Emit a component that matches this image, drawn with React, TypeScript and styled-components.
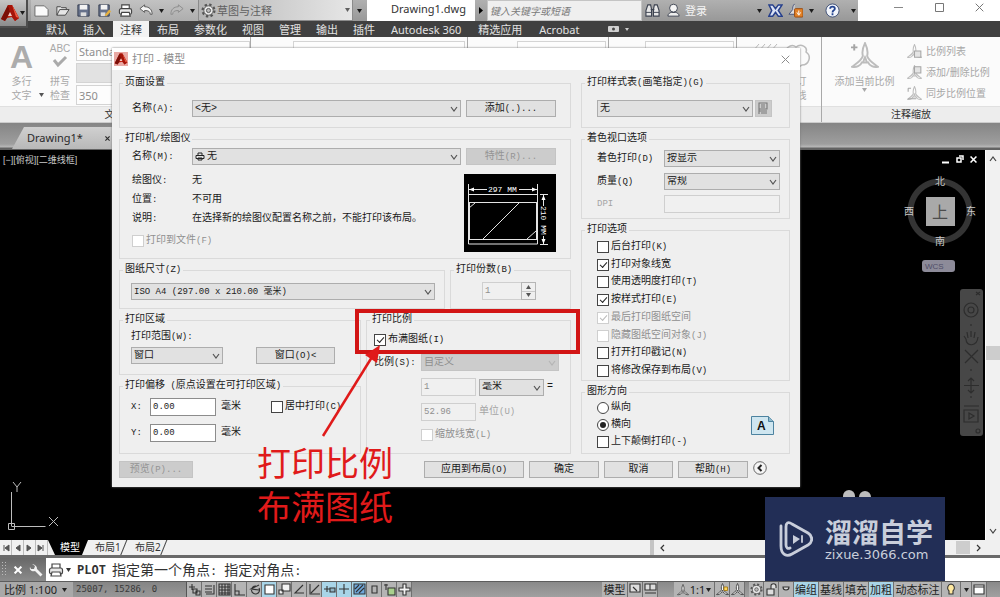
import React from "react";
import styled, { createGlobalStyle, css } from "styled-components";

const CJK = '"Noto Sans CJK SC", sans-serif';

const GlobalStyle = createGlobalStyle`
  *, *::before, *::after { box-sizing: border-box; }
  html, body { margin: 0; padding: 0; }
  body { font: 11px/14px "Noto Sans", ${CJK}; color: #1c1c1c; background: #000; }
  button, input, select { font: inherit; color: inherit; margin: 0; padding: 0; border-radius: 0; }
  button { border: 0; background: none; }
  svg { display: block; flex: none; }
`;

const Desktop = styled.div`
  position: relative;
  display: flex;
  flex-direction: column;
  min-height: 100vh;
  overflow: hidden;
`;

/* ---------- application title bar ---------- */

const TitleBar = styled.header`
  display: flex;
  height: 21px;
  align-items: stretch;
  background: linear-gradient(#b0b0b0, #989898);
  padding-left: 31px;
`;
const AppButton = styled.button`
  position: absolute;
  left: 0;
  top: 0;
  z-index: 1;
  width: 28px;
  height: 28px;
  display: flex;
  align-items: center;
  background: linear-gradient(#c6c6c6, #8c8c8c);
  border-right: 2px solid #4d4d4d;
  border-bottom: 2px solid #4d4d4d;
`;
const QuickTools = styled.div`
  display: flex;
  align-items: center;
  width: 167px;
  background: linear-gradient(#c2c2c2, #adadad);
`;
const IconButton = styled.button<{ $w?: number }>`
  width: ${(p) => p.$w ?? 21}px;
  display: flex;
  align-items: center;
  justify-content: center;
`;
const Workspace = styled.div`
  position: relative;
  display: flex;
  align-items: center;
  width: 155px;
  padding-left: 2px;
  background: linear-gradient(90deg, #b4b4b4, #e6e6e6);
  border: 1px solid #8b8b8b;
  border-top: 0;
  color: #606060;
`;
const WorkspaceSelect = styled.select`
  flex: 1;
  appearance: none;
  border: 0;
  background: none;
  padding-left: 1px;
  font: 11px/18px ${CJK};
  height: 19px;
`;
const DocName = styled.h1`
  margin: 0 0 0 1px;
  width: 108px;
  padding-left: 24px;
  background: #fff;
  font: 11px/17px "Noto Sans", sans-serif;
  color: #333;
`;
const SearchInput = styled.input`
  width: 155px;
  border: 1px solid #c4c4c4;
  background: #efefef;
  padding-left: 2px;
  font: italic 10px/16px ${CJK};
  &::placeholder { color: #7a7a7a; opacity: 1; }
`;
const Login = styled.button`
  width: 70px;
  padding-left: 1px;
  text-align: left;
  color: #f4f4f4;
`;
const WindowButtons = styled.div`
  display: flex;
  flex: 1;
  padding: 0 0 6px 20px;
  background: #fff;
  color: #777;
  & > button { flex: 1; }
`;

/* ---------- ribbon ---------- */

const RibbonTabs = styled.nav`
  display: flex;
  gap: 1px;
  height: 16px;
  padding-left: 39px;
  background: #404040;
`;
const RibbonTab = styled.a<{ $active?: boolean; $wide?: boolean }>`
  padding: 0 ${(p) => (p.$wide ? 8 : 7)}px;
  line-height: 17px;
  text-decoration: none;
  color: ${(p) => (p.$active ? "#333" : "#e2e2e2")};
  background: ${(p) => (p.$active ? "#f3f3f3" : "transparent")};
`;
const Ribbon = styled.section`
  display: grid;
  grid-template-columns: 251px 217px 141px 128px 85px 1fr;
  height: 86px;
  background: #fbfbfb;
  border-bottom: 1px solid #ccc;
  color: #a8a8a8;
  line-height: 13px;
`;
const Panel = styled.div`
  display: flex;
  flex-direction: column;
  border-right: 1px solid #a9a9a9;
  min-width: 0;
  &:last-child { border-right: 0; }
`;
const PanelBody = styled.div<{ $pad?: string }>`
  flex: 1;
  display: flex;
  padding: ${(p) => p.$pad ?? "4px 2px"};
`;
const PanelTitle = styled.div`
  display: flex;
  align-items: center;
  justify-content: center;
  gap: 16px;
  height: 16px;
  background: #ededed;
  border-top: 1px solid #e0e0e0;
  color: #333;
  font-size: 10px;
`;
const BigTool = styled.button<{ $w: number }>`
  width: ${(p) => p.$w}px;
  display: flex;
  flex-direction: column;
  align-items: center;
  justify-content: flex-start;
  white-space: nowrap;
  font-size: 10px;
  line-height: 14px;
`;
const DropMark = styled.button`
  align-self: flex-end;
  height: 22px;
  width: 5px;
  color: #555;
`;
const BigA = styled.span`
  font: bold 32px/32px "Liberation Sans", sans-serif;
  color: #acacac;
`;
const Abc = styled.span`
  font: 10px/12px "Liberation Sans", sans-serif;
  margin-top: 2px;
`;
const Caption = styled.span<{ $gap?: number }>`
  margin-top: ${(p) => p.$gap ?? 0}px;
`;
const StyleFields = styled.div`
  flex: 1;
  display: flex;
  flex-direction: column;
  gap: 2px;
`;
const RibbonField = styled.input<{ $fill?: string }>`
  width: 100%;
  height: 20px;
  padding-left: 2px;
  border: 1px solid #d4d4d4;
  background: ${(p) => p.$fill ?? "#fdfdfd"};
  color: #8e8e8e;
`;
const SmallTools = styled.div`
  display: flex;
  flex-direction: column;
  gap: 3px;
  padding-left: 8px;
`;
const SmallTool = styled.button`
  display: flex;
  align-items: center;
  gap: 4px;
  height: 18px;
  font-size: 10px;
  white-space: nowrap;
`;

/* ---------- drawing area ---------- */

const DocTabs = styled.div`
  display: flex;
  align-items: flex-end;
  height: 27px;
  padding-left: 12px;
  background: linear-gradient(#858585, #9e9e9e 21px, #b9b9b9 24px, #636363 25px);
  border-bottom: 1px solid #636363;
`;
const DocTab = styled.a`
  display: flex;
  align-items: center;
  justify-content: space-between;
  width: 110px;
  height: 22px;
  padding: 0 12px 0 15px;
  clip-path: polygon(0 100%, 12px 0, 100% 0, 100% 100%);
  background: linear-gradient(#d0d0d0, #b8b8b8);
  color: #2a2a2a;
  text-decoration: none;
`;
const Work = styled.main`
  flex: 1;
  display: flex;
  min-height: 390px;
`;
const Canvas = styled.div`
  flex: 1;
  position: relative;
  display: flex;
  justify-content: space-between;
  background: #000;
  color: #c9c9c9;
`;
const ViewLabel = styled.span`
  padding: 3px;
  font: 9px/14px "Liberation Sans", ${CJK};
`;
const UcsIcon = styled.svg`
  position: absolute;
  left: 6px;
  bottom: 6px;
`;
const ViewTools = styled.div`
  display: flex;
  flex-direction: column;
  align-items: flex-end;
  padding: 5px 2px;
`;
const MdiButtons = styled.div`
  display: flex;
  gap: 3px;
  padding-right: 4px;
  color: #fff;
`;
const Compass = styled.div`
  display: grid;
  grid-template: 16px 44px 16px / 18px 44px 18px;
  place-items: center;
  margin: 9px 3px 0 0;
  font: 10px/14px ${CJK};
  background: radial-gradient(circle at center, transparent 26px, #343434 27px, #343434 32px, transparent 33px);
`;
const CompassPoint = styled.span<{ $at: string }>`
  grid-area: ${(p) => p.$at};
`;
const CubeFace = styled.button`
  grid-area: 2 / 2;
  width: 29px;
  height: 29px;
  background: #a9a9a9;
  color: #4c4c4c;
  font: 16px/26px ${CJK};
`;
const Wcs = styled.button`
  margin: 11px 28px 0 0;
  width: 33px;
  height: 12px;
  padding-left: 3px;
  border-radius: 3px;
  background: #8d8b99;
  color: #4f4d68;
  text-align: left;
  font: 8px/11px "Liberation Sans", sans-serif;
`;
const NavBar = styled.div`
  margin-top: 17px;
  width: 23px;
  height: 147px;
  border-radius: 3px;
  background: #474747;
`;
const VScroll = styled.div`
  width: 15px;
  display: flex;
  flex-direction: column;
  align-items: center;
  justify-content: space-between;
  padding: 5px 0;
  background: #f1f1f1;
  border-left: 1px solid #fff;
  color: #444;
`;
const VThumb = styled.div`
  width: 100%;
  height: 14px;
  margin-top: 16px;
  background: #cdcdcd;
`;

/* ---------- layout tabs, command line, status bar ---------- */

const LayoutBar = styled.div`
  display: flex;
  height: 15px;
  background: #f0f0f0;
  color: #333;
`;
const StepButton = styled.button`
  width: 12px;
  display: flex;
  align-items: center;
  justify-content: center;
  border-right: 1px solid #bbb;
  color: #555;
`;
const LayoutTab = styled.a<{ $active?: boolean }>`
  width: 40px;
  padding-left: ${(p) => (p.$active ? 12 : 7)}px;
  font: 10px/14px "Noto Sans", ${CJK};
  text-decoration: none;
  white-space: nowrap;
  color: ${(p) => (p.$active ? "#fff" : "#333")};
  ${(p) =>
    p.$active
      ? css`background: #000; clip-path: polygon(0 0, 100% 0, 34px 100%, 7px 100%);`
      : css`background: linear-gradient(112deg, transparent 35px, #444 36px, transparent 37px);`}
`;
const HScroll = styled.div`
  display: flex;
  align-items: center;
  justify-content: space-between;
  width: 35%;
  margin-left: auto;
  padding: 0 18px 0 5px;
  border-left: 4px solid #c4c4c4;
  color: #333;
`;
const HThumb = styled.div`
  width: 14px;
  height: 13px;
  margin: 0 4px 0 auto;
  background: #cdcdcd;
`;
const CommandBar = styled.div`
  display: flex;
  align-items: center;
  height: 26px;
  border-top: 3px solid #6a6a6a;
  background: #fff;
  color: #333;
`;
const CommandGrip = styled.div`
  display: flex;
  align-items: center;
  justify-content: space-between;
  width: 46px;
  height: 100%;
  padding: 0 3px 0 2px;
  background: linear-gradient(#686868, #8b8b8b);
  color: #fff;
`;
const CommandName = styled.b`
  margin-left: 6px;
  font: bold 12px/18px "DejaVu Sans Mono", monospace;
`;
const Prompt = styled.span`
  margin-left: 6px;
  white-space: pre;
  font: 14px/18px ${CJK};
`;
const PromptMark = styled.span`
  font: 12px/18px "DejaVu Sans Mono", monospace;
`;
const StatusBar = styled.footer`
  display: flex;
  align-items: stretch;
  height: 16px;
  background: linear-gradient(#8a8a8a, #a0a0a0);
  border-top: 1px solid #5d5d5d;
  color: #222;
  font: 11px/15px "Noto Sans", ${CJK};
  white-space: nowrap;
`;
const StatusScale = styled.button`
  display: flex;
  align-items: center;
  width: 73px;
  gap: 5px;
  padding-left: 4px;
  text-align: left;
  background: #a9a9a9;
`;
const Coords = styled.output`
  flex: none;
  width: 114px;
  padding-left: 3px;
  white-space: pre;
  background: linear-gradient(#858585, #989898);
  border-right: 1px solid #555;
  font: 9px/15px "DejaVu Sans Mono", monospace;
  color: #3a3a3a;
`;
const StatusButton = styled.button<{ $on?: boolean; $w?: number }>`
  flex: none;
  width: ${(p) => p.$w ?? 15}px;
  display: flex;
  justify-content: center;
  align-items: center;
  gap: 1px;
  border-right: 1px solid #707070;
  background: ${(p) => (p.$on ? "#a9d5e8" : "#b4b4b4")};
`;
const StatusSpace = styled.div<{ $w?: number }>`
  ${(p) => (p.$w ? `width: ${p.$w}px; flex: none;` : "flex: 1;")}
`;

/* ---------- plot dialog ---------- */

const Dialog = styled.form`
  position: absolute;
  left: 112px;
  top: 48px;
  z-index: 2;
  width: 688px;
  background: #efefef;
  box-shadow: 0 0 2px #777;
  font: 10px/12px "Liberation Mono", ${CJK};
  color: #1a1a1a;
`;
const DialogTitle = styled.div`
  display: flex;
  align-items: center;
  gap: 4px;
  height: 22px;
  padding: 0 10px 0 2px;
  background: #fff;
  color: #8c8c8c;
  font: 11px/16px "Noto Sans", ${CJK};
`;
const Spacer = styled.span`
  flex: 1;
`;
const DialogBody = styled.div`
  display: grid;
  grid-template-columns: 1fr 209px;
  gap: 7px 10px;
  padding: 7px 10px 9px 7px;
`;
const Column = styled.div`
  display: flex;
  flex-direction: column;
  gap: 5px;
  min-width: 0;
`;
const Pair = styled.div<{ $right: number }>`
  display: grid;
  grid-template-columns: 1fr ${(p) => p.$right}px;
  gap: 5px;
`;
const GroupFrame = styled.fieldset<{ $h: number; $grow?: boolean }>`
  min-width: 0;
  margin: 0;
  padding: 0;
  min-height: ${(p) => p.$h}px;
  ${(p) => p.$grow && "flex: 1;"}
  border: 1px solid #dadada;
  white-space: nowrap;
`;
const GroupBody = styled.div<{ $pad: string }>`
  padding: ${(p) => p.$pad};
`;
const Legend = styled.legend`
  margin-left: 3px;
  padding: 0 2px;
  white-space: pre;
`;
const Latin = styled.span`
  font-size: 9px;
  white-space: pre;
`;
const Row = styled.div<{ $top?: number; $gap?: number }>`
  display: flex;
  align-items: center;
  gap: ${(p) => p.$gap ?? 5}px;
  margin-top: ${(p) => p.$top ?? 0}px;
`;
const FieldLabel = styled.label<{ $w: number; $off?: boolean }>`
  flex: none;
  width: ${(p) => p.$w}px;
  color: ${(p) => (p.$off ? "#a5a5a5" : "inherit")};
`;
const SelectBox = styled.span<{ $w?: number; $off?: boolean }>`
  position: relative;
  ${(p) => (p.$w ? `width: ${p.$w}px; flex: none;` : "flex: 1;")}
  height: 17px;
  color: ${(p) => (p.$off ? "#999" : "#222")};
  & > svg { position: absolute; right: 3px; top: 5px; color: ${(p) => (p.$off ? "#b5b5b5" : "#555")}; pointer-events: none; }
`;
const NativeSelect = styled.select<{ $small?: boolean; $indent?: number }>`
  appearance: none;
  display: block;
  width: 100%;
  height: 17px;
  padding-left: ${(p) => p.$indent ?? 2}px;
  border: 1px solid #adadad;
  background: #e1e1e1;
  font-size: ${(p) => (p.$small ? 9 : 10)}px;
  opacity: 1;
  &:disabled { background: #cccccc; border-color: #c4c4c4; color: #8f8f8f; }
`;
const SelectGlyph = styled.span`
  position: absolute;
  left: 3px;
  top: 4px;
`;
const PushButton = styled.button<{ $w: number }>`
  flex: none;
  width: ${(p) => p.$w}px;
  height: 17px;
  border: 1px solid #adadad;
  background: #e1e1e1;
  line-height: 14px;
  text-align: center;
  &:disabled { background: #cccccc; border-color: #c4c4c4; color: #949494; }
`;
const TextInput = styled.input<{ $w: number }>`
  flex: none;
  width: ${(p) => p.$w}px;
  height: 18px;
  padding: 0 2px 1px;
  border: 1px solid #8c8c8c;
  background: #fff;
  font-size: 9px;
  &:disabled { background: #f0f0f0; border-color: #cfcfcf; color: #8f8f8f; }
`;
const Facts = styled.dl`
  display: grid;
  grid-template-columns: 60px 1fr;
  grid-auto-rows: 19px;
  align-items: center;
  margin: 6px 0 2px;
  & > dd { margin: 0; }
`;
const Preview = styled.svg`
  margin-top: 9px;
`;
const Between = styled.div`
  display: flex;
  justify-content: space-between;
`;
const CheckLabel = styled.label<{ $off?: boolean }>`
  display: flex;
  align-items: center;
  gap: 2px;
  height: 12px;
  color: ${(p) => (p.$off ? "#8f8f8f" : "inherit")};
`;
const CheckInput = styled.input<{ $radio?: boolean }>`
  appearance: none;
  flex: none;
  width: 12px;
  height: 12px;
  border: 1px solid #444;
  background: #fff;
  border-radius: ${(p) => (p.$radio ? "50%" : 0)};
  &:disabled { border-color: #cfcfcf; }
  &:checked::after {
    content: "";
    display: block;
    ${(p) =>
      p.$radio
        ? css`width: 6px; height: 6px; margin: 2px; border-radius: 50%; background: #222;`
        : css`width: 7px; height: 4px; margin: 2px 0 0 2px; border: solid #222; border-width: 0 0 1px 1px; transform: rotate(-48deg);`}
  }
  &:disabled:checked::after { border-color: #bbb; }
`;
const OptionList = styled.div<{ $h: number }>`
  display: flex;
  flex-direction: column;
  justify-content: space-between;
  align-items: flex-start;
  height: ${(p) => p.$h}px;
`;
const Spinner = styled.div`
  display: flex;
  width: 54px;
  height: 18px;
  color: #999;
  & > input { border-right: 0; }
`;
const SpinButtons = styled.div`
  display: grid;
  width: 15px;
  border: 1px solid #b5b5b5;
  & > button { display: grid; place-items: center; color: #555; }
  & > button + button { border-top: 1px solid #c9c9c9; }
`;
const RoundButton = styled.button`
  width: 14px;
  height: 14px;
  margin-bottom: 3px;
`;
const Footer = styled.div`
  grid-column: 1 / -1;
  display: flex;
  align-items: center;
  gap: 5px;
  padding-right: 23px;
`;

/* ---------- annotation and watermark ---------- */

const RedFrame = styled.div`
  position: absolute;
  left: 355px;
  top: 309px;
  z-index: 3;
  width: 225px;
  height: 45px;
  border: 4px solid #d21515;
`;
const RedArrow = styled.svg`
  position: absolute;
  left: 318px;
  top: 342px;
  z-index: 3;
`;
const RedNote = styled.p`
  position: absolute;
  left: 257px;
  top: 440px;
  z-index: 3;
  margin: 0;
  color: #e01a1a;
  font: 34px/44px ${CJK};
`;
const Watermark = styled.div`
  position: absolute;
  right: 55px;
  bottom: 16px;
  z-index: 4;
  display: flex;
  align-items: center;
  gap: 12px;
  width: 180px;
  height: 84px;
  padding-left: 14px;
  background: #222e56;
  color: #c9cedb;
`;
const WatermarkName = styled.strong`
  display: block;
  font: bold 27px/32px ${CJK};
`;
const WatermarkUrl = styled.span`
  display: block;
  font: 13px/14px "DejaVu Sans", sans-serif;
`;
const WatermarkEars = styled.svg`
  position: absolute;
  right: 128px;
  bottom: 100px;
  z-index: 4;
`;

/* ---------- small drawings ---------- */

const Chevron = ({ d = "down" }: { d?: "down" | "up" | "left" | "right" }) => {
  const paths = { down: "M1 2l3 4 3-4", up: "M1 6l3-4 3 4", left: "M5 1L2 4l3 3", right: "M3 1l3 3-3 3" };
  return (
    <svg width="8" height="8" viewBox="0 0 8 8" fill="none" stroke="currentColor" strokeWidth="1.2">
      <path d={paths[d]} />
    </svg>
  );
};
const Tri = ({ up }: { up?: boolean }) => (
  <svg width="5" height="4" viewBox="0 0 5 4" fill="currentColor">
    <path d={up ? "M0 4l2.5-4L5 4z" : "M0 0h5L2.5 4z"} />
  </svg>
);
const Cross = ({ s = 9, w = 1 }: { s?: number; w?: number }) => (
  <svg width={s} height={s} viewBox="0 0 9 9" fill="none" stroke="currentColor" strokeWidth={w}>
    <path d="M.7.7l7.6 7.6M8.3.7L.7 8.3" />
  </svg>
);
const Logo = ({ s, tile }: { s: number; tile?: boolean }) => (
  <svg width={s} height={s} viewBox="0 0 20 20">
    {tile && <path d="M0 0h20v20H0z" fill="#e9a9a4" />}
    <path d="M1 16L8 2h4l7 13-4 3-3-4-5 1-2 3z" fill="#c3210f" />
    <path d="M8 2h4l7 13-4 3-3-4-2-5z" fill="#a51409" />
    <path d="M12 2l7 13-3-1z" fill="#ec5a41" />
    <path d="M1 16L8 2l2 7-3 6-2 3z" fill="#7a0e07" />
    <path d="M8 13l2-4 2 4z" fill="#f0cfca" />
  </svg>
);
const Printer = ({ s = 16 }: { s?: number }) => (
  <svg width={s} height={s} viewBox="0 0 16 16" fill="#e8e8e8" stroke="#444" strokeWidth="1.2">
    <path d="M4 6V2h8v4" fill="#fff" />
    <rect x="1.5" y="6" width="13" height="6" rx="2" />
    <path d="M4 10h8l1 4H3z" fill="#fff" />
  </svg>
);
const Gear = ({ s = 15 }: { s?: number }) => (
  <svg width={s} height={s} viewBox="0 0 16 16" fill="none" stroke="#555">
    <circle cx="8" cy="8" r="6.3" strokeWidth="2.4" strokeDasharray="2.5 2.45" />
    <circle cx="8" cy="8" r="5" fill="#e9e9e9" />
    <circle cx="8" cy="8" r="2.2" fill="#bbb" />
  </svg>
);
const toolStroke = { fill: "none", stroke: "#333", strokeWidth: 1.1 } as const;
const ToolGlyph = ({ name }: { name: string }) => {
  const g: Record<string, React.ReactNode> = {
    "新建": <path d="M1 3h10l4 4v7H1z" fill="#fafafa" stroke="#666" />,
    "打开": <path d="M2 13V4h4l1 1h5v2M2 13l3-6h10l-4 6z" fill="#e6e6e6" stroke="#444" />,
    "保存": (<><path d="M2 2h12v12H2z" fill="#66718a" stroke="#333d50" /><path d="M4 2h8v5H4z" fill="#f3f3f3" /><path d="M5 10h6v4H5z" fill="#ddd" /></>),
    "另存为": (<><path d="M2 2h11v12H2z" fill="#66718a" stroke="#333d50" /><path d="M4 2h7v5H4z" fill="#f3f3f3" /><path d="M4 10h5v4H4z" fill="#ddd" /><path d="M8 13l5-6 2 2-5 5z" fill="#e5b040" /></>),
    "放弃": <path d="M6 2L1 6l5 4V8c4 0 6 1 6 4h2c0-5-3-8-8-8z" fill="#f5f5f5" stroke="#555" />,
    "重做": <path d="M10 2l5 4-5 4V8c-4 0-6 1-6 4H2c0-5 3-8 8-8z" fill="#bbb" stroke="#8c8c8c" />,
    "搜索": (<><path d="M3 2h3l1 5v7H1V8zM10 2h3l2 6v6H9V7zM6 7h4" stroke="#3c4250" fill="#e6e6e6" strokeWidth="1.200" /><path d="M1 10h6M9 10h6" stroke="#3c4250" /></>),
    "用户": (<><path d="M2 14c0-3 3-4 4-4h4c1 0 4 1 4 4z" fill="#eee" stroke="#3c4250" /><circle cx="8" cy="5.5" r="4.200" fill="#f6f6f6" stroke="#3c4250" /></>),
    "Exchange": <path d="M1 2h4l3 4 3-4h4l-4 6 4 6h-4l-3-4-3 4H1l3-6z" fill="#dbe2f5" stroke="#27408c" strokeWidth="1.6" />,
    "联机": (<><path d="M7 1c-2 2-2 4-2 6l-4 5h6" fill="#ddd" stroke="#44507a" /><rect x="7" y="6" width="9" height="9" rx="1" fill="#e28127" stroke="#994b10" /><path d="M11.500 8v4m-2-2l2 3 2-3" stroke="#fff" fill="none" /></>),
    "帮助": (<><circle cx="8" cy="8" r="7" fill="#f2f5fb" stroke="#3c4d74" /><path d="M5.500 6c0-3 5-3 5 0 0 2-2.500 1.500-2.500 4M8 11v2" stroke="#23438f" strokeWidth="1.9" fill="none" /></>),
  };
  return <svg width="15" height="15" viewBox="0 0 16 16">{g[name]}</svg>;
};
const STAR = "M13 1c-2 4-3 8-2 12-1 4-6 7-10 10 4 1 8-1 9-4h6c1 3 5 5 9 4-4-3-9-6-10-10 1-4 0-8-2-12z";
const ScaleGlyph = ({ s = 26, extra, dark }: { s?: number; extra?: string; dark?: boolean }) => (
  <svg width={s} height={s} viewBox="0 0 26 26" fill={dark ? "#f4f4f4" : "none"} stroke={dark ? "#444" : "#bdbdbd"} strokeWidth="1.8">
    <path d={STAR} />
    <path d="M11 19c1-1 1-3 2-5 1 2 1 4 2 5" />
    {extra && <path d={extra} fill={dark ? "#ffd75e" : "#e4e4e4"} stroke={dark ? "#a67c12" : "#a5a5a5"} />}
  </svg>
);

const statusGlyphs = [
  "M1 4h6M4 1v6M5 6h4v4H5zM8 8h4v4H8z", "M2 3h7M2 6h7M2 9h7M11 2v9H3", "M1 1h11v11H1zM4 1v11M7 1v11M10 1v11M1 4h11M1 7h11M1 10h11",
  "M2 1v11h10M2 8h4v4", "M11 2L3 6l8 1M11 5a4 4 0 1 1-3-2", "M2 2h9v9H2z", "M4 1h8v7H4zM1 7h4v4H1z", "M10 2L2 10h9",
  "M2 1v10h10M3 10l8-8", "M1 6h6M4 3v6M7 5h5v4H7z", "M6 1v10M1 6h10", "M1 1h11v10H1zM3 9l7-7M2 6l4-4M6 10l5-5", "M4 3h5v7H4z",
  "M1 2h4M3 1v6M5 5h7v7H5z", "M5 1h3v4h4v3H8v4H5V8H1V5h4z",
];
const glyphFill: Record<number, string> = { 5: "#fff", 6: "#f2f2f2", 9: "#8fb4c4", 11: "#6fa8dc", 13: "#a8d08d", 14: "#f2f2f2" };
const StatusGlyph = ({ d, fill = "none" }: { d: string; fill?: string }) => (
  <svg width="13" height="13" viewBox="0 0 13 13" {...toolStroke} fill={fill}>
    <path d={d} />
  </svg>
);

/* Splits a caption so that half-width runs take the narrower size. */
const Mixed = ({ text }: { text: string }) => (
  <>
    {text.split(/([\x20-\x7e]+)/).map((part, i) => (i % 2 ? <Latin key={i}>{part}</Latin> : part))}
  </>
);

type GroupProps = { title: string; h?: number; pad: string; grow?: boolean; children: React.ReactNode };
const Group = ({ title, h = 0, pad, grow, children }: GroupProps) => (
  <GroupFrame $h={h} $grow={grow}>
    <Legend><Mixed text={title} /></Legend>
    <GroupBody $pad={pad}>{children}</GroupBody>
  </GroupFrame>
);

type SelectProps = { id?: string; label?: string; value: string; w?: number; off?: boolean; small?: boolean; indent?: number; glyph?: React.ReactNode };
const Select = ({ id, label, value, w, off, small, indent, glyph }: SelectProps) => (
  <SelectBox $w={w} $off={off}>
    <NativeSelect id={id} aria-label={label} disabled={off} $small={small} $indent={indent}>
      <option>{value}</option>
    </NativeSelect>
    {glyph && <SelectGlyph>{glyph}</SelectGlyph>}
    <Chevron />
  </SelectBox>
);

type CheckProps = { text: string; on?: boolean; off?: boolean; radio?: boolean };
const Check = ({ text, on, off, radio }: CheckProps) => (
  <CheckLabel $off={off}>
    <CheckInput type={radio ? "radio" : "checkbox"} name={radio ? "orientation" : undefined} defaultChecked={on} disabled={off} $radio={radio} />
    <span><Mixed text={text} /></span>
  </CheckLabel>
);

const PlotPreview = () => (
  <Preview width="92" height="78" viewBox="0 0 92 78" fill="none" stroke="#e4e4e4" strokeWidth="1">
    <rect width="92" height="78" fill="#000" stroke="none" />
    <path d="M4.500 10v60h69V10M4.500 20.500h69M5 28.500h68M5 65.500h68M5.500 28v37M72.500 28v37" />
    <path d="M5 15.500h18M55 15.500h18M19 65l36-36M5 34l6-5M63 65l9-8M76 20.500h8M76 70.500h8M79.500 21v11M79.500 62v8" />
    <path d="M5 15.500l5-2v4zM73 15.500l-5-2v4zM79.500 21l-2 5h4zM79.500 70l-2-5h4z" fill="#fff" stroke="none" />
    <text x="24" y="18" fill="#fff" stroke="none" fontFamily="Liberation Mono" fontSize="8">297 MM</text>
    <text transform="translate(77 32) rotate(90)" fill="#fff" stroke="none" fontFamily="Liberation Mono" fontSize="8">210 MM</text>
  </Preview>
);

const PlotDialog = () => (
  <Dialog onSubmit={(e) => e.preventDefault()}>
    <DialogTitle>
      <Logo s={14} tile />
      <span>打印 - 模型</span>
      <Spacer />
      <IconButton type="button" $w={10} aria-label="关闭"><Cross s={9} /></IconButton>
    </DialogTitle>
    <DialogBody>
      <Column>
        <Group title="页面设置" h={51} pad="11px 14px 0 12px">
          <Row>
            <FieldLabel $w={55} htmlFor="setup"><Mixed text="名称(A):" /></FieldLabel>
            <Select id="setup" value="<无>" />
            <PushButton type="button" $w={90}><Mixed text="添加(.)..." /></PushButton>
          </Row>
        </Group>
        <Group title="打印机/绘图仪" h={126} pad="3px 14px 0 12px">
          <Row>
            <FieldLabel $w={55} htmlFor="printer"><Mixed text="名称(M):" /></FieldLabel>
            <Select
              id="printer"
              value="无"
              indent={14}
              glyph={
                <svg width="10" height="9" viewBox="0 0 10 9" fill="none" stroke="#222">
                  <path d="M3 3V1h4v2M1 3.500h8v3H1zM3 6h4v2H3z" />
                </svg>
              }
            />
            <PushButton type="button" $w={90} disabled><Mixed text="特性(R)..." /></PushButton>
          </Row>
          <Between>
            <Column>
              <Facts>
                <dt><Mixed text="绘图仪:" /></dt><dd>无</dd>
                <dt><Mixed text="位置:" /></dt><dd>不可用</dd>
                <dt><Mixed text="说明:" /></dt><dd>在选择新的绘图仪配置名称之前，不能打印该布局。</dd>
              </Facts>
              <Check text="打印到文件(F)" off />
            </Column>
            <PlotPreview />
          </Between>
        </Group>
        <Pair $right={121}>
          <Group title="图纸尺寸(Z)" h={45} pad="7px 9px 0 11px">
            <Row><Select label="图纸尺寸" value="ISO A4 (297.00 x 210.00 毫米)" small /></Row>
          </Group>
          <Group title="打印份数(B)" h={45} pad="6px 0 0 31px">
            <Spinner>
              <TextInput $w={39} aria-label="打印份数" defaultValue="1" disabled />
              <SpinButtons>
                <button type="button" aria-label="增加"><Tri up /></button>
                <button type="button" aria-label="减少"><Tri /></button>
              </SpinButtons>
            </Spinner>
          </Group>
        </Pair>
        <Pair $right={205}>
          <Column>
            <Group title="打印区域" h={61} pad="5px 0 0 11px">
              <FieldLabel $w={80} htmlFor="range"><Mixed text="打印范围(W):" /></FieldLabel>
              <Row $top={4} $gap={33}>
                <Select id="range" value="窗口" w={92} />
                <PushButton type="button" $w={79}><Mixed text="窗口(O)<" /></PushButton>
              </Row>
            </Group>
            <Group title="打印偏移 (原点设置在可打印区域)" h={74} pad="6px 0 0 11px">
              <Row>
                <FieldLabel $w={14} htmlFor="offx"><Mixed text="X:" /></FieldLabel>
                <TextInput id="offx" $w={66} defaultValue="0.00" />
                <FieldLabel as="span" $w={45}>毫米</FieldLabel>
                <Check text="居中打印(C)" />
              </Row>
              <Row $top={8}>
                <FieldLabel $w={14} htmlFor="offy"><Mixed text="Y:" /></FieldLabel>
                <TextInput id="offy" $w={66} defaultValue="0.00" />
                <span>毫米</span>
              </Row>
            </Group>
          </Column>
          <Group title="打印比例" h={140} pad="8px 11px 0 7px">
            <Check text="布满图纸(I)" on />
            <Row $top={8} $gap={0}>
              <FieldLabel $w={47} htmlFor="scale"><Mixed text="比例(S):" /></FieldLabel>
              <Select id="scale" value="自定义" off />
            </Row>
            <Row $top={7} $gap={3}>
              <FieldLabel as="span" $w={44} />
              <TextInput $w={55} aria-label="打印单位数" defaultValue="1" disabled />
              <Select label="单位" value="毫米" w={65} />
              <span>=</span>
            </Row>
            <Row $top={7} $gap={3}>
              <FieldLabel as="span" $w={44} />
              <TextInput id="units" $w={55} defaultValue="52.96" disabled />
              <FieldLabel $w={40} $off htmlFor="units"><Mixed text="单位(U)" /></FieldLabel>
            </Row>
            <Row $top={8} $gap={3}>
              <FieldLabel as="span" $w={44} />
              <Check text="缩放线宽(L)" off />
            </Row>
          </Group>
        </Pair>
      </Column>

      <Column>
        <Group title="打印样式表(画笔指定)(G)" h={51} pad="11px 17px 0 15px">
          <Row $gap={2}>
            <Select label="打印样式表" value="无" />
            <PushButton type="button" $w={17} disabled aria-label="编辑">
              <svg width="15" height="15" viewBox="0 0 15 15" {...toolStroke} stroke="#777">
                <path d="M3 2h8v6H3zM5 4h4M5 6h4M3 10h8M5 12h6M3 8v5" />
              </svg>
            </PushButton>
          </Row>
        </Group>
        <Group title="着色视口选项" h={86} pad="5px 9px 0 15px">
          <Row $gap={0}>
            <FieldLabel $w={67} htmlFor="shade"><Mixed text="着色打印(D)" /></FieldLabel>
            <Select id="shade" value="按显示" />
          </Row>
          <Row $top={6} $gap={0}>
            <FieldLabel $w={67} htmlFor="quality"><Mixed text="质量(Q)" /></FieldLabel>
            <Select id="quality" value="常规" />
          </Row>
          <Row $top={5} $gap={0}>
            <FieldLabel $w={67} $off htmlFor="dpi"><Mixed text="DPI" /></FieldLabel>
            <TextInput id="dpi" $w={116} disabled />
          </Row>
        </Group>
        <Group title="打印选项" h={157} pad="5px 0 0 15px">
          <OptionList $h={136}>
            <Check text="后台打印(K)" />
            <Check text="打印对象线宽" on />
            <Check text="使用透明度打印(T)" />
            <Check text="按样式打印(E)" on />
            <Check text="最后打印图纸空间" on off />
            <Check text="隐藏图纸空间对象(J)" off />
            <Check text="打开打印戳记(N)" />
            <Check text="将修改保存到布局(V)" />
          </OptionList>
        </Group>
        <Group title="图形方向" pad="4px 15px 0 15px" grow>
          <Between>
            <OptionList $h={46}>
              <Check text="纵向" radio />
              <Check text="横向" radio on />
              <Check text="上下颠倒打印(-)" />
            </OptionList>
            <Row>
              <svg width="23" height="19" viewBox="0 0 23 19">
                <path d="M.5.5h17l5 5v13H.5z" fill="#cfe6f0" stroke="#4d83a0" />
                <path d="M17.500.5v5h5" fill="#8fb9cc" stroke="#4d83a0" />
                <text x="6" y="14" fontFamily="Liberation Sans" fontWeight="bold" fontSize="12" fill="#111">A</text>
              </svg>
            </Row>
          </Between>
        </Group>
      </Column>

      <Footer>
        <PushButton type="button" $w={74} disabled><Mixed text="预览(P)..." /></PushButton>
        <Spacer />
        <PushButton type="button" $w={100}><Mixed text="应用到布局(O)" /></PushButton>
        <PushButton type="submit" $w={70}>确定</PushButton>
        <PushButton type="button" $w={69}>取消</PushButton>
        <PushButton type="button" $w={70}><Mixed text="帮助(H)" /></PushButton>
        <RoundButton type="button" aria-label="收起">
          <svg width="14" height="14" viewBox="0 0 14 14" fill="#f4f4f4" stroke="#666">
            <circle cx="7" cy="7" r="6.300" />
            <path d="M8.500 4L5.500 7l3 3" fill="none" stroke="#222" strokeWidth="2" />
          </svg>
        </RoundButton>
      </Footer>
    </DialogBody>
  </Dialog>
);

const tabs = ["默认", "插入", "注释", "布局", "参数化", "视图", "管理", "输出", "插件", "Autodesk 360", "精选应用", "Acrobat"];

export default function App() {
  return (
    <Desktop>
      <GlobalStyle />
      <AppButton aria-label="应用程序菜单"><Logo s={20} /><Tri /></AppButton>
      <TitleBar>
        <QuickTools>
          {["新建", "打开", "保存", "另存为"].map((n) => (
            <IconButton key={n} aria-label={n}><ToolGlyph name={n} /></IconButton>
          ))}
          <IconButton aria-label="打印"><Printer s={15} /></IconButton>
          <IconButton aria-label="放弃"><ToolGlyph name="放弃" /></IconButton>
          <IconButton $w={9} aria-label="放弃列表"><Tri /></IconButton>
          <IconButton aria-label="重做"><ToolGlyph name="重做" /></IconButton>
          <IconButton $w={10} aria-label="重做列表"><Tri /></IconButton>
        </QuickTools>
        <Workspace>
          <Gear />
          <WorkspaceSelect aria-label="工作空间"><option>草图与注释</option></WorkspaceSelect>
          <IconButton $w={10} aria-label="展开"><Tri /></IconButton>
        </Workspace>
        <IconButton $w={13} aria-label="自定义"><Tri /></IconButton>
        <DocName>Drawing1.dwg</DocName>
        <IconButton $w={12} aria-label="展开搜索">
          <svg width="4" height="7" viewBox="0 0 4 7"><path d="M0 0l4 3.500L0 7z" /></svg>
        </IconButton>
        <SearchInput aria-label="搜索" placeholder="键入关键字或短语" />
        <IconButton aria-label="搜索"><ToolGlyph name="搜索" /></IconButton>
        <IconButton aria-label="用户"><ToolGlyph name="用户" /></IconButton>
        <Login>登录</Login>
        <IconButton $w={10} aria-label="登录菜单"><Tri /></IconButton>
        <IconButton $w={22} aria-label="Exchange"><ToolGlyph name="Exchange" /></IconButton>
        <IconButton $w={19} aria-label="联机"><ToolGlyph name="联机" /></IconButton>
        <IconButton $w={12} aria-label="联机菜单"><Tri /></IconButton>
        <IconButton $w={31} aria-label="帮助"><ToolGlyph name="帮助" /></IconButton>
        <IconButton $w={10} aria-label="帮助菜单"><Tri /></IconButton>
        <WindowButtons>
          <IconButton aria-label="最小化"><svg width="9" height="9"><path d="M0 4.500h9" stroke="#888" /></svg></IconButton>
          <IconButton aria-label="最大化"><svg width="9" height="9"><path d="M.5.5h8v8h-8z" fill="none" stroke="#777" /></svg></IconButton>
          <IconButton aria-label="关闭"><Cross /></IconButton>
        </WindowButtons>
      </TitleBar>

      <RibbonTabs>
        {tabs.map((t, i) => <RibbonTab key={t} href="#" $active={t === "注释"} $wide={i > 8}>{t}</RibbonTab>)}
        <IconButton $w={60} aria-label="最小化功能区">
          <svg width="22" height="8" viewBox="0 0 22 8">
            <rect y="1" width="11" height="6" rx="1" fill="#d0d0d0" />
            <circle cx="5.500" cy="4" r="1.500" fill="#444" />
            <path d="M17 3h4l-2 3z" fill="#ccc" />
          </svg>
        </IconButton>
      </RibbonTabs>

      <Ribbon>
        <Panel>
          <PanelBody $pad="4px 0 0 4px">
            <BigTool $w={35}><BigA>A</BigA><Caption $gap={1}>多行</Caption><span>文字</span></BigTool>
            <DropMark aria-label="文字列表"><Tri /></DropMark>
            <BigTool $w={32}>
              <Abc>ABC</Abc>
              <svg width="16" height="13" viewBox="0 0 16 13" fill="none" stroke="#aaa" strokeWidth="3"><path d="M2 5l4 5 8-8" /></svg>
              <Caption $gap={6}>拼写</Caption><span>检查</span>
            </BigTool>
            <StyleFields>
              <RibbonField aria-label="文字样式" defaultValue="Standard" />
              <RibbonField aria-label="查找文字" $fill="#e2e2e2" />
              <RibbonField aria-label="文字高度" defaultValue="350" />
            </StyleFields>
          </PanelBody>
          <PanelTitle>文字<Tri /></PanelTitle>
        </Panel>
        <Panel>
          <PanelBody $pad="4px 2px 0 42px"><RibbonField aria-label="标注样式" /></PanelBody>
          <PanelTitle />
        </Panel>
        <Panel>
          <PanelBody $pad="4px 2px 0 49px"><RibbonField aria-label="引线样式" /></PanelBody>
          <PanelTitle />
        </Panel>
        <Panel>
          <PanelBody $pad="4px 2px 0 36px"><RibbonField aria-label="表格样式" /></PanelBody>
          <PanelTitle />
        </Panel>
        <Panel>
          <PanelBody $pad="6px 7px 0 14px">
            <BigTool $w={28} aria-label="区域覆盖">
              <svg width="28" height="26" viewBox="0 0 28 26" stroke="#bbb"><path d="M2 8l6-7M8 8l6-7M14 8l6-7M20 8l6-7" /></svg>
            </BigTool>
            <BigTool $w={36}>
              <svg width="28" height="26" viewBox="0 0 28 26" fill="none" stroke="#bbb" strokeWidth="1.500">
                <path d="M3 12c-3-6 5-12 10-8 5-4 12 0 10 5 6 4 3 13-4 13-3 3-8 3-10 0-7 0-9-6-6-10z" />
              </svg>
              <Caption $gap={5}>修订</Caption><span>云线</span>
            </BigTool>
          </PanelBody>
          <PanelTitle />
        </Panel>
        <Panel>
          <PanelBody $pad="5px 2px 0 8px">
            <BigTool $w={69}>
              <ScaleGlyph s={28} extra="M0 5h6M3 2v6" />
              <Caption $gap={4}>添加当前比例</Caption>
              <Tri />
            </BigTool>
            <SmallTools>
              <SmallTool><ScaleGlyph s={15} extra="M13 12h11v11H13z" />比例列表</SmallTool>
              <SmallTool><ScaleGlyph s={15} extra="M13 3h11v11H13z" />添加/删除比例</SmallTool>
              <SmallTool><ScaleGlyph s={15} extra="M2 4v6M2 4h5M2 22h14" />同步比例位置</SmallTool>
            </SmallTools>
          </PanelBody>
          <PanelTitle>注释缩放</PanelTitle>
        </Panel>
      </Ribbon>

      <DocTabs><DocTab href="#">Drawing1*<Cross s={5} w={2} /></DocTab></DocTabs>

      <Work>
        <Canvas>
          <ViewLabel>[−][俯视][二维线框]</ViewLabel>
          <ViewTools>
            <MdiButtons>
              <IconButton $w={11} aria-label="最小化窗口"><svg width="8" height="9"><path d="M0 7.500h7" stroke="#fff" strokeWidth="2" /></svg></IconButton>
              <IconButton $w={11} aria-label="还原窗口"><svg width="8" height="9" fill="none" stroke="#fff" strokeWidth="1.500"><path d="M1 3h4v4H1zM3 1h4v4" /></svg></IconButton>
              <IconButton $w={11} aria-label="关闭窗口"><Cross s={7} w={2} /></IconButton>
            </MdiButtons>
            <Compass>
              <CompassPoint $at="1 / 2">北</CompassPoint>
              <CompassPoint $at="2 / 1">西</CompassPoint>
              <CubeFace>上</CubeFace>
              <CompassPoint $at="2 / 3">东</CompassPoint>
              <CompassPoint $at="3 / 2">南</CompassPoint>
            </Compass>
            <Wcs>WCS</Wcs>
            <NavBar>
              <svg width="23" height="147" viewBox="0 0 23 147" fill="none" stroke="#2d2d2d" strokeWidth="1.200">
                <circle cx="11" cy="21" r="7" /><circle cx="11" cy="21" r="3" />
                <path d="M11 35v2M6 50l-2-3M8 49l-1-6M11 48v-6M14 49l1-6M6 50c0 8 11 8 12-2" />
                <path d="M5 61l13 13M18 61L5 74M11 80v2M11 89v15M4 96.500h15M8 92l3-3 3 3M8 101l3 3 3-3M11 107v2M4 117h15M4 121h14v12H4zM9 124l5 3-5 3z" />
                <circle cx="18" cy="142" r="2" /><path d="M16 3l4 3M20 3l-4 3" />
              </svg>
            </NavBar>
          </ViewTools>
          <UcsIcon width="56" height="52" viewBox="0 0 56 52" fill="none" stroke="#bdbdbd">
            <path d="M5.500 10v34M5.500 44.500h34M2.500 41.500h6v6h-6zM7 0l4 5 4-5M11 5v5M43 35l9 9M52 35l-9 9" />
          </UcsIcon>
        </Canvas>
        <VScroll><Chevron d="up" /><VThumb /><Chevron /></VScroll>
      </Work>

      <LayoutBar>
        {["M8 1v6L4 4zM3 1v6", "M7 1v6L3 4z", "M2 1v6l4-3z", "M1 1v6l4-3zM6 1v6"].map((d) => (
          <StepButton key={d} aria-label="切换布局"><svg width="9" height="8" fill="currentColor" stroke="currentColor" strokeWidth="1"><path d={d} /></svg></StepButton>
        ))}
        <LayoutTab href="#" $active>模型</LayoutTab>
        <LayoutTab href="#">布局1</LayoutTab>
        <LayoutTab href="#">布局2</LayoutTab>
        <HScroll><Chevron d="left" /><HThumb /><Chevron d="right" /></HScroll>
      </LayoutBar>

      <CommandBar>
        <CommandGrip>
          <svg width="4" height="16" fill="#bbb"><path d="M0 0h1v1H0zM3 0h1v1H3zM0 3h1v1H0zM3 3h1v1H3zM0 6h1v1H0zM3 6h1v1H3zM0 9h1v1H0zM3 9h1v1H3zM0 12h1v1H0zM3 12h1v1H3z" /></svg>
          <Cross s={8} w={2.2} />
          <svg width="14" height="14" viewBox="0 0 14 14"><path d="M12.500 12.500L6 6" stroke="#f2f2f2" strokeWidth="2.800" /><path d="M3 1l3 2-1 3-3 0-1-2c-1 3 2 5 5 4 3-1 3-6-3-7z" fill="#f2f2f2" /></svg>
        </CommandGrip>
        <IconButton $w={20} aria-label="最近命令"><Printer s={16} /></IconButton>
        <Tri />
        <CommandName>PLOT</CommandName>
        <Prompt>指定第一个角点<PromptMark>: </PromptMark>指定对角点<PromptMark>:</PromptMark></Prompt>
      </CommandBar>

      <StatusBar>
        <StatusScale>比例 1:100<Tri /></StatusScale>
        <Coords>25007, 15286, 0</Coords>
        {statusGlyphs.map((d, i) => (
          <StatusButton key={i} $on={i === 5 || (i > 8 && i < 12)}><StatusGlyph d={d} fill={glyphFill[i]} /></StatusButton>
        ))}
        <StatusSpace />
        <StatusButton $w={26}>模型</StatusButton>
        <StatusButton><StatusGlyph d="M1 1h10v8H1zM4 4l4 4" fill="#ddd" /></StatusButton>
        <StatusButton><StatusGlyph d="M1 1h5v6H1zM6 1h6v6H6zM1 10h11" fill="#ddd" /></StatusButton>
        <StatusSpace $w={16} />
        <StatusButton $w={41}><ScaleGlyph s={12} dark />1:1<Tri /></StatusButton>
        <StatusButton><ScaleGlyph s={13} dark extra="M16 8h7v7h-7z" /></StatusButton>
        <StatusButton><ScaleGlyph s={13} dark /></StatusButton>
        <StatusSpace $w={4} />
        <StatusButton><Gear s={13} /></StatusButton>
        <StatusButton><StatusGlyph d="M2 6h7v6H2zM6 6V3c0-3 5-3 5 0v2" fill="#ddd" /></StatusButton>
        <StatusButton><StatusGlyph d="M3 4a3 3 0 1 0 6 0z" fill="#ddd" /></StatusButton>
        <StatusButton $w={25} $on>编组</StatusButton>
        <StatusButton $w={25}>基线</StatusButton>
        <StatusButton $w={25}>填充</StatusButton>
        <StatusButton $w={25} $on>加粗</StatusButton>
        <StatusButton $w={48}>动态标注</StatusButton>
        <StatusButton $w={19}><StatusGlyph d="M6 1a4 4 0 0 0-2 7v3h4V8a4 4 0 0 0-2-7z" fill="#ffe9a0" /></StatusButton>
        <StatusButton $w={11}><Tri /></StatusButton>
        <StatusButton><StatusGlyph d="M1 2h10v9H1zM1 4h10" fill="#fff" /></StatusButton>
        <StatusSpace $w={13} />
      </StatusBar>

      <PlotDialog />

      <RedFrame />
      <RedArrow width="66" height="98" viewBox="0 0 66 98">
        <path d="M5 94L54 15" stroke="#e01a1a" strokeWidth="2.500" />
        <path d="M62 3l-3 18-12-8z" fill="#e01a1a" />
      </RedArrow>
      <RedNote>打印比例<br />布满图纸</RedNote>

      <WatermarkEars width="30" height="7" viewBox="0 0 30 7" fill="#bdbdbd">
        <circle cx="7" cy="6" r="6" /><circle cx="23" cy="7" r="6" />
      </WatermarkEars>
      <Watermark>
        <svg width="34" height="36" viewBox="0 0 34 36" fill="none" stroke="#c9cedb" strokeWidth="2.800" strokeLinecap="round">
          <path d="M2 5v20c0 9 6 11 11 8l16-9c5-3 5-9 0-12L13 3C9 0 7 2 7 6v18c0 3 2 4 4 3" />
          <path d="M14 14v9l7-5z" fill="#c9cedb" stroke="none" />
          <path d="M23 15v6" strokeWidth="1.800" />
        </svg>
        <span><WatermarkName>溜溜自学</WatermarkName><WatermarkUrl>zixue.3066.com</WatermarkUrl></span>
      </Watermark>
    </Desktop>
  );
}
